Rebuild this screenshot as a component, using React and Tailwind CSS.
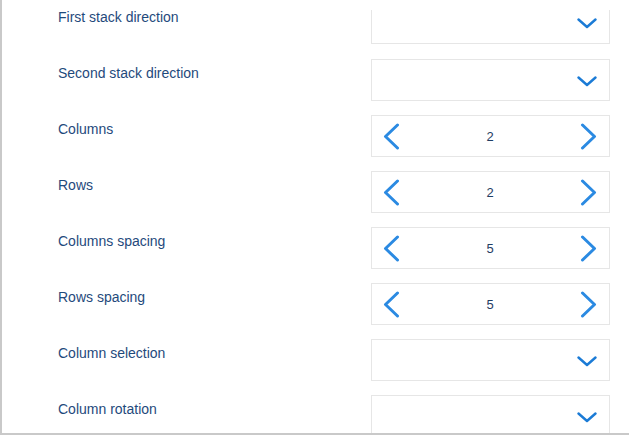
import React from "react";

const rows = [
  { label: "First stack direction", type: "select", first: true },
  { label: "Second stack direction", type: "select" },
  { label: "Columns", type: "stepper", value: 2 },
  { label: "Rows", type: "stepper", value: 2 },
  { label: "Columns spacing", type: "stepper", value: 5 },
  { label: "Rows spacing", type: "stepper", value: 5 },
  { label: "Column selection", type: "select" },
  { label: "Column rotation", type: "select" },
];

const ChevronDown = () => (
  <svg width="20" height="11" viewBox="0 0 20 11" fill="none">
    <polyline points="1.5,1.5 10,9 18.5,1.5" stroke="#1b7bd6" strokeWidth="2.4" strokeLinecap="round" strokeLinejoin="round" />
  </svg>
);

const ChevronSide = ({ dir }) => (
  <svg width="17" height="27" viewBox="0 0 17 27" fill="none">
    {dir === "left" ? (
      <polyline points="14.5,2 2.5,13.5 14.5,25" stroke="#2b8ae2" strokeWidth="3" strokeLinecap="round" strokeLinejoin="round" />
    ) : (
      <polyline points="2.5,2 14.5,13.5 2.5,25" stroke="#2b8ae2" strokeWidth="3" strokeLinecap="round" strokeLinejoin="round" />
    )}
  </svg>
);

const Field = ({ row }) => {
  if (row.type === "stepper") {
    return (
      <div className="flex h-[42px] w-[239px] items-center justify-between border border-[#e6e6e6] bg-white pl-[11px] pr-[12px]">
        <ChevronSide dir="left" />
        <span className="pt-[2px] text-[13px] text-[#1f3d63]">{row.value}</span>
        <ChevronSide dir="right" />
      </div>
    );
  }
  return (
    <div
      className={
        row.first
          ? "mt-[7px] flex h-[34px] w-[239px] items-center justify-end border border-t-0 border-[#e6e6e6] bg-white pb-[6px] pr-[12px]"
          : "flex h-[42px] w-[239px] items-center justify-end border border-[#e6e6e6] bg-white pr-[12px] pt-[2px]"
      }
    >
      <ChevronDown />
    </div>
  );
};

export default function App() {
  return (
    <div
      className="relative h-[435px] w-[629px] overflow-hidden border-b-2 border-l-2 border-[#c9c9c9] bg-white"
      style={{ fontFamily: '"Liberation Sans", Arial, sans-serif' }}
    >
      <div className="absolute left-[-2px] top-0 h-full w-[2px] bg-[#a3a3a3]" />
      <div className="absolute left-[-2px] top-[28px] h-[62px] w-[2px] bg-[#5f9ea3]" />
      <div className="absolute left-[-2px] top-[43px] h-[2px] w-[2px] bg-[#2c4a55]" />
      <div className="flex flex-col pt-[3px]">
        {rows.map((row) => (
          <div key={row.label} className="flex h-[56px] items-start pl-[56px] pr-[19px]">
            <div className="mt-[6px] flex-1 text-[14px] leading-4 text-[#1f4a7c]">{row.label}</div>
            <Field row={row} />
          </div>
        ))}
      </div>
    </div>
  );
}
